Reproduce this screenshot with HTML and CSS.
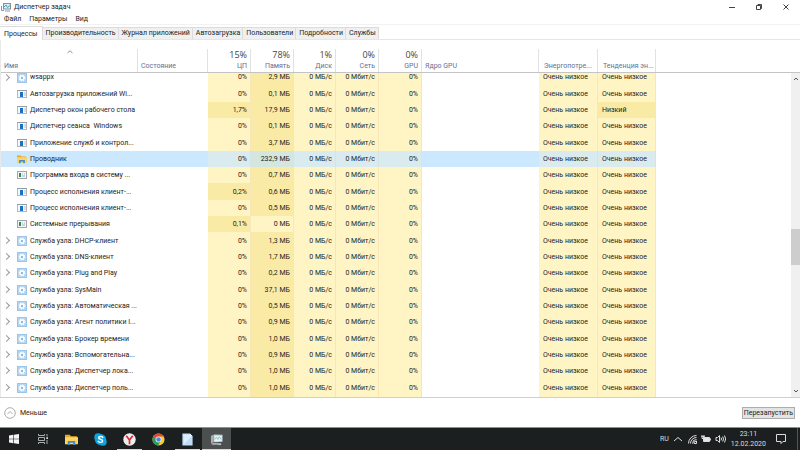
FILE: index.html
```html
<!DOCTYPE html>
<html lang="ru">
<head>
   <meta charset="utf-8">
   <title>Диспетчер задач</title>
   <link rel="stylesheet" href="styles.css">
</head>

<body>
   <!-- shared process icons -->
   <svg class="sprite" aria-hidden="true">
      <symbol id="gear" viewBox="0 0 10 10">
         <rect x="0.5" y="0.5" width="9" height="9" fill="#b4d5f1" stroke="#9cc4e6" />
         <circle cx="5" cy="5" r="2.700" fill="none" stroke="#fff" stroke-width="1.400" stroke-dasharray="1.200 0.920" />
         <circle cx="5" cy="5" r="1.800" fill="#8abbe6" stroke="#fff" stroke-width="1.200" />
      </symbol>
      <symbol id="app" viewBox="0 0 10 10">
         <rect x="0.5" y="1.5" width="9" height="7" fill="#f7f8f9" stroke="#b3b8bc" />
         <path d="M0 1.5H10" stroke="#979da2" />
         <rect x="3" y="3" width="3" height="5" fill="#1673c8" />
         <path d="M7 4H9M7 6H9" stroke="#b9c4cd" />
      </symbol>
      <symbol id="sys" viewBox="0 0 10 10">
         <rect x="0.5" y="1.5" width="9" height="7" fill="#f4f7f6" stroke="#a0a6ab" />
         <rect x="2" y="3" width="2" height="4" fill="#2d8a63" />
         <path d="M5 4H6M7 4H8M5 6H8" stroke="#9fb9ba" />
      </symbol>
      <symbol id="folder" viewBox="0 0 14 12">
         <path d="M0 1H5L6.500 2.500H13V11H0Z" fill="#e9a825" />
         <path d="M0 3.500H14V11H0Z" fill="#fcd462" />
         <path d="M3 12V7.500H11V12H8.800V9.500H5.200V12Z" fill="#3d8bd0" />
      </symbol>
   </svg>

   <main class="window">
      <header class="titlebar">
         <svg class="logo" viewBox="0 0 10 9">
            <rect x="2.500" y="0.5" width="7" height="5.500" fill="#d5edf3" stroke="#7f9298" />
            <path d="M3 4L5 2L6.500 4.500L9 2.500" fill="none" stroke="#46a5bd" />
            <path d="M0.5 3V7.500H3M4 8H9" fill="none" stroke="#89999e" />
         </svg>
         <h1>Диспетчер задач</h1>
         <div class="controls">
            <button aria-label="Свернуть"><svg viewBox="0 0 8 8"><path d="M1 4.500H7" /></svg></button>
            <button aria-label="Восстановить"><svg viewBox="0 0 8 8"><path d="M1.500 2.500H5.500V6.500H1.500ZM3 2.500V1.500H6.500V5.500H5.500" /></svg></button>
            <button aria-label="Закрыть"><svg viewBox="0 0 8 8"><path d="M1.500 1.500L6.500 6.500M6.500 1.500L1.500 6.500" /></svg></button>
         </div>
      </header>

      <nav class="menu">
         <button>Файл</button>
         <button>Параметры</button>
         <button>Вид</button>
      </nav>

      <div class="tabs" role="tablist">
         <button role="tab" class="current" aria-selected="true">Процессы</button>
         <button role="tab">Производительность</button>
         <button role="tab">Журнал приложений</button>
         <button role="tab">Автозагрузка</button>
         <button role="tab">Пользователи</button>
         <button role="tab">Подробности</button>
         <button role="tab">Службы</button>
      </div>

      <div class="list">
         <table>
            <colgroup>
               <col class="c-name"><col class="c-state"><col class="c-num"><col class="c-num"><col class="c-disk">
               <col class="c-num"><col class="c-num"><col class="c-core"><col class="c-power"><col class="c-trend"><col>
            </colgroup>
            <thead>
               <tr>
                  <th class="sorted"><svg class="sort" viewBox="0 0 6 4"><path d="M0.500 3L3 0.800L5.500 3" /></svg>Имя</th>
                  <th>Состояние</th>
                  <th class="num"><b>15%</b>ЦП</th>
                  <th class="num"><b>78%</b>Память</th>
                  <th class="num"><b>1%</b>Диск</th>
                  <th class="num"><b>0%</b>Сеть</th>
                  <th class="num"><b>0%</b>GPU</th>
                  <th>Ядро GPU</th>
                  <th class="power">Энергопотре...</th>
                  <th class="power">Тенденция эн...</th>
                  <th></th>
               </tr>
            </thead>
            <tbody>
               <tr class="cut group"><td><svg><use href="#gear" /></svg>wsappx</td><td></td><td>0%</td><td>2,9 МБ</td><td>0 МБ/с</td><td>0 Мбит/с</td><td>0%</td><td></td><td>Очень низкое</td><td>Очень низкое</td><td></td></tr>
               <tr><td><svg><use href="#app" /></svg>Автозагрузка приложений Wi...</td><td></td><td>0%</td><td>0,1 МБ</td><td>0 МБ/с</td><td>0 Мбит/с</td><td>0%</td><td></td><td>Очень низкое</td><td>Очень низкое</td><td></td></tr>
               <tr><td><svg><use href="#app" /></svg>Диспетчер окон рабочего стола</td><td></td><td class="warm">1,7%</td><td>17,9 МБ</td><td>0 МБ/с</td><td>0 Мбит/с</td><td>0%</td><td></td><td>Очень низкое</td><td class="warm">Низкий</td><td></td></tr>
               <tr><td><svg><use href="#app" /></svg>Диспетчер сеанса&nbsp; Windows</td><td></td><td>0%</td><td>0,1 МБ</td><td>0 МБ/с</td><td>0 Мбит/с</td><td>0%</td><td></td><td>Очень низкое</td><td>Очень низкое</td><td></td></tr>
               <tr><td><svg><use href="#app" /></svg>Приложение служб и контрол...</td><td></td><td>0%</td><td>3,7 МБ</td><td>0 МБ/с</td><td>0 Мбит/с</td><td>0%</td><td></td><td>Очень низкое</td><td>Очень низкое</td><td></td></tr>
               <tr class="selected"><td><svg><use href="#folder" /></svg>Проводник</td><td></td><td>0%</td><td>232,9 МБ</td><td>0 МБ/с</td><td>0 Мбит/с</td><td>0%</td><td></td><td>Очень низкое</td><td>Очень низкое</td><td></td></tr>
               <tr><td><svg><use href="#sys" /></svg>Программа входа в систему ...</td><td></td><td>0%</td><td>0,7 МБ</td><td>0 МБ/с</td><td>0 Мбит/с</td><td>0%</td><td></td><td>Очень низкое</td><td>Очень низкое</td><td></td></tr>
               <tr><td><svg><use href="#app" /></svg>Процесс исполнения клиент-...</td><td></td><td class="warm">0,2%</td><td>0,6 МБ</td><td>0 МБ/с</td><td>0 Мбит/с</td><td>0%</td><td></td><td>Очень низкое</td><td>Очень низкое</td><td></td></tr>
               <tr><td><svg><use href="#app" /></svg>Процесс исполнения клиент-...</td><td></td><td>0%</td><td>0,5 МБ</td><td>0 МБ/с</td><td>0 Мбит/с</td><td>0%</td><td></td><td>Очень низкое</td><td>Очень низкое</td><td></td></tr>
               <tr><td><svg><use href="#sys" /></svg>Системные прерывания</td><td></td><td class="warm">0,1%</td><td class="cool">0 МБ</td><td>0 МБ/с</td><td>0 Мбит/с</td><td>0%</td><td></td><td>Очень низкое</td><td>Очень низкое</td><td></td></tr>
               <tr class="group"><td><svg><use href="#gear" /></svg>Служба узла: DHCP-клиент</td><td></td><td>0%</td><td>1,3 МБ</td><td>0 МБ/с</td><td>0 Мбит/с</td><td>0%</td><td></td><td>Очень низкое</td><td>Очень низкое</td><td></td></tr>
               <tr class="group"><td><svg><use href="#gear" /></svg>Служба узла: DNS-клиент</td><td></td><td>0%</td><td>1,7 МБ</td><td>0 МБ/с</td><td>0 Мбит/с</td><td>0%</td><td></td><td>Очень низкое</td><td>Очень низкое</td><td></td></tr>
               <tr class="group"><td><svg><use href="#gear" /></svg>Служба узла: Plug and Play</td><td></td><td>0%</td><td>0,2 МБ</td><td>0 МБ/с</td><td>0 Мбит/с</td><td>0%</td><td></td><td>Очень низкое</td><td>Очень низкое</td><td></td></tr>
               <tr class="group"><td><svg><use href="#gear" /></svg>Служба узла: SysMain</td><td></td><td>0%</td><td>37,1 МБ</td><td>0 МБ/с</td><td>0 Мбит/с</td><td>0%</td><td></td><td>Очень низкое</td><td>Очень низкое</td><td></td></tr>
               <tr class="group"><td><svg><use href="#gear" /></svg>Служба узла: Автоматическая ...</td><td></td><td>0%</td><td>0,5 МБ</td><td>0 МБ/с</td><td>0 Мбит/с</td><td>0%</td><td></td><td>Очень низкое</td><td>Очень низкое</td><td></td></tr>
               <tr class="group"><td><svg><use href="#gear" /></svg>Служба узла: Агент политики I...</td><td></td><td>0%</td><td>0,9 МБ</td><td>0 МБ/с</td><td>0 Мбит/с</td><td>0%</td><td></td><td>Очень низкое</td><td>Очень низкое</td><td></td></tr>
               <tr class="group"><td><svg><use href="#gear" /></svg>Служба узла: Брокер времени</td><td></td><td>0%</td><td>1,0 МБ</td><td>0 МБ/с</td><td>0 Мбит/с</td><td>0%</td><td></td><td>Очень низкое</td><td>Очень низкое</td><td></td></tr>
               <tr class="group"><td><svg><use href="#gear" /></svg>Служба узла: Вспомогательна...</td><td></td><td>0%</td><td>0,9 МБ</td><td>0 МБ/с</td><td>0 Мбит/с</td><td>0%</td><td></td><td>Очень низкое</td><td>Очень низкое</td><td></td></tr>
               <tr class="group"><td><svg><use href="#gear" /></svg>Служба узла: Диспетчер лока...</td><td></td><td>0%</td><td>1,0 МБ</td><td>0 МБ/с</td><td>0 Мбит/с</td><td>0%</td><td></td><td>Очень низкое</td><td>Очень низкое</td><td></td></tr>
               <tr class="group"><td><svg><use href="#gear" /></svg>Служба узла: Диспетчер поль...</td><td></td><td>0%</td><td>1,0 МБ</td><td>0 МБ/с</td><td>0 Мбит/с</td><td>0%</td><td></td><td>Очень низкое</td><td>Очень низкое</td><td></td></tr>
            </tbody>
         </table>
         <div class="side">
            <div class="corner"></div>
            <div class="scrollbar">
               <button aria-label="Вверх"><svg viewBox="0 0 6 4"><path d="M1 3L3 1L5 3" /></svg></button>
               <div class="before"></div>
               <div class="thumb"></div>
               <div class="after"></div>
               <button aria-label="Вниз"><svg viewBox="0 0 6 4"><path d="M1 1L3 3L5 1" /></svg></button>
            </div>
         </div>
      </div>

      <footer class="actions">
         <button class="less">
            <svg viewBox="0 0 12 12"><circle cx="6" cy="6" r="5.300" /><path d="M3.500 7L6 4.500L8.500 7" /></svg>
            Меньше
         </button>
         <button class="restart">Перезапустить</button>
      </footer>
   </main>

   <div class="taskbar">
      <button class="start" aria-label="Пуск">
         <svg viewBox="0 0 10 10"><path d="M0 1.400L4.300 0.800V4.700H0ZM4.900 0.700L10 0V4.700H4.900ZM0 5.300H4.300V9.200L0 8.600ZM4.900 5.300H10V10L4.900 9.300Z" fill="#f4f4f4" /></svg>
      </button>
      <button aria-label="Представление задач">
         <svg viewBox="0 0 10 10"><path d="M0.500 0V1.500H6.500V0M0.500 10V8.500H6.500V10M0.500 3.500H6.500V6.500H0.500ZM9 0V2.500M9 6V10" fill="none" stroke="#b9bcbd" stroke-width="0.900" /><rect x="8.300" y="3.300" width="1.700" height="1.700" fill="#e0e0e0" /></svg>
      </button>
      <button aria-label="Проводник"><svg class="big" viewBox="0 0 14 12"><use href="#folder" width="14" height="12" /></svg></button>
      <button aria-label="Skype">
         <svg class="big" viewBox="0 0 14 14"><circle cx="4.500" cy="4.500" r="4.200" fill="#0aa5e3" /><circle cx="9.500" cy="9.500" r="4.200" fill="#0aa5e3" /><circle cx="7" cy="7" r="6" fill="#0aa5e3" /><path d="M9.500 4.800C8.600 3.400 4.900 3.400 5 5.300C5.100 7.200 9.300 6.300 9.300 8.500C9.300 10.500 5.500 10.500 4.500 8.900" fill="none" stroke="#fff" stroke-width="1.500" stroke-linecap="round" /></svg>
      </button>
      <button class="running" aria-label="Яндекс">
         <svg class="big" viewBox="0 0 14 14"><circle cx="7" cy="7" r="6.700" fill="#eee" /><path d="M3.500 3L7 7.500V12M10.500 3L7 7.500" fill="none" stroke="#dc2630" stroke-width="1.800" /></svg>
      </button>
      <button aria-label="Chrome">
         <svg class="big" viewBox="0 0 14 14"><circle cx="7" cy="7" r="6.500" fill="#fbcb35" /><path d="M7 7L1.370 3.750A6.500 6.500 0 0 1 12.630 3.750H7Z" fill="#df4637" /><path d="M7 7L1.370 3.750A6.500 6.500 0 0 0 6.500 13.480L9.600 8.500Z" fill="#269e57" /><circle cx="7" cy="7" r="3.200" fill="#f5f5f5" /><circle cx="7" cy="7" r="2.400" fill="#4a87e5" /></svg>
      </button>
      <button class="running" aria-label="Документ">
         <svg class="big" viewBox="0 0 14 14"><path d="M1.500 0.500H9.500L12.500 3.500V13.500H1.500Z" fill="#bcdcf8" /><path d="M2.500 1.500H8.500L11 4L3 12.500Z" fill="#dceefd" /><path d="M9.500 0.500V3.500H12.500Z" fill="#f8fcff" /></svg>
      </button>
      <button class="running active" aria-label="Диспетчер задач">
         <svg class="big" viewBox="0 0 14 14"><path d="M1 3L4 2V10L1 11ZM1 11L8 10.500L9 12.500L3 13Z" fill="#a8adaf" /><path d="M4 1.500L13.500 2V9.500L4 10Z" fill="#c9d0d2" /><path d="M5 3L12.500 3.300V8.500L5 8.800Z" fill="#e7f5f8" /><path d="M5 7L7 4.500L8.500 7L10 4L12 7" fill="none" stroke="#67b5cc" stroke-width="0.800" /><path d="M8 11H12V13H8Z" fill="#b6bbbd" /></svg>
      </button>

      <div class="tray">
         <span class="lang">RU</span>
         <svg viewBox="0 0 10 10"><path d="M1 7L5 3.500L9 7" /></svg>
         <svg viewBox="0 0 10 10"><path d="M1.500 9.500A8 8 0 0 1 9.500 1.500M3.500 9.500A6 6 0 0 1 9.500 3.500M5.500 9.500A4 4 0 0 1 9.500 5.500" stroke="#aaa" /><path d="M7 9.500V8L9.500 7V9.500Z" fill="#ddd" stroke="none" /></svg>
         <svg viewBox="0 0 10 10"><path class="charge" d="M2.500 3.500H8.500V7.500H2.500Z" /><path d="M9.500 4.500V6.500M0.500 2.500H3.500M1 1V4.500H3V1" /></svg>
         <svg class="volume" viewBox="0 0 12 10"><path d="M1 3.500H2.500L4.500 1.500V8.500L2.500 6.500H1ZM6 3.500Q7 5 6 6.500M7.700 2.500Q9.300 5 7.700 7.500M9.500 1.500Q11.800 5 9.500 8.500" /></svg>
         <div class="clock"><time>23:11</time><span>12.02.2020</span></div>
         <svg class="notes" viewBox="0 0 12 12"><path d="M1.500 1.500H10.500V8.500H8L6 10.500V8.500H1.500Z" /></svg>
      </div>
   </div>
</body>
</html>
```
FILE: styles.css
```css
/* Basic styles */

* {
   box-sizing: border-box;
}
body {
   margin: 0;
   background: white;
   color: #1c1c1c;
   font: 7px/10px Roboto, "Open Sans", sans-serif;
}
button {
   margin: 0;
   padding: 0;
   border: 0;
   background: none;
   color: inherit;
   font: inherit;
}
svg {
   display: block;
   flex: none;
}
.sprite {
   position: absolute;
   width: 0;
   height: 0;
}

/* Title bar and menu */

.titlebar {
   display: flex;
   align-items: center;
   height: 14px;
   padding-left: 1px;
}
.titlebar h1 {
   margin: 0 0 0 3px;
   font-size: 7px;
   font-weight: normal;
}
.logo {
   width: 10px;
   height: 9px;
}
.controls {
   display: flex;
   gap: 19px;
   margin-left: auto;
   padding-right: 10px;
}
.controls svg {
   width: 8px;
   height: 8px;
}
.controls path {
   fill: none;
   stroke: #444;
}
.menu {
   display: flex;
   gap: 8px;
   height: 11px;
   padding-left: 4px;
   border-bottom: 1px solid #f2f2f2;
}

/* Tabs */

.tabs {
   display: flex;
   align-items: flex-end;
   height: 15px;
   border-bottom: 1px solid #e6e6e6;
}
.tabs button {
   height: 12px;
   padding: 0 2px 0 3px;
   border: 1px solid #dcdcdc;
   border-left: 0;
   border-bottom: 0;
   background: #f0f0f0;
   line-height: 11px;
}
.tabs .current {
   height: 14px;
   margin-bottom: -1px;
   padding: 0 4px;
   background: white;
   line-height: 12px;
}

/* Process list */

.list {
   display: flex;
   border-bottom: 1px solid #cfcfcf;
}
table {
   flex: 1;
   width: 0;
   table-layout: fixed;
   border-collapse: separate;
   border-spacing: 0;
   border-left: 1px solid #e9e9e9;
   white-space: nowrap;
}
.c-name { width: 137px; }
.c-state { width: 70px; }
.c-num { width: 43px; }
.c-disk { width: 42px; }
.c-core { width: 117px; }
.c-power { width: 59px; }
.c-trend { width: 58px; }

th {
   height: 33px;
   padding: 0 3px 1px;
   border-bottom: 1px solid #c4c4c4;
   background: linear-gradient(#e2e2e2, #e2e2e2) right 9px / 1px 100% no-repeat;
   color: #5f7192;
   font-weight: normal;
   text-align: left;
   vertical-align: bottom;
}
th:last-child {
   background: none;
}
th.num {
   padding-right: 4px;
   text-align: right;
}
th.power {
   padding-left: 5px;
}
th b {
   display: block;
   color: #444;
   font-family: "Open Sans", sans-serif;
   font-size: 9px;
   font-weight: normal;
   line-height: 12px;
}
.sort {
   width: 6px;
   height: 4px;
   margin: 0 auto 7px;
}
.sort path {
   fill: none;
   stroke: #8a95a5;
}
td {
   height: 16px;
   padding: 0 3px 0 4px;
}
tbody tr:nth-child(3n+2) td {
   height: 17px;
}
tbody tr:last-child td {
   height: 18px;
}
td:nth-child(n+3) {
   border-right: 1px solid #f8e5b8;
   background: #fff4c4;
   text-align: right;
}
td:nth-child(4), td.warm {
   background: #f9eba6;
}
td.cool {
   background: #fff4c4;
}
td:nth-child(8), td:nth-child(11) {
   border: 0;
   background: none;
}
td:nth-child(9), td:nth-child(10) {
   text-align: left;
}
td:first-child {
   padding: 0 0 0 29px;
}
td svg {
   float: left;
   width: 10px;
   height: 10px;
   margin-left: -13px;
}
/* arrow in front of a row that can be expanded */
.group td:first-child::before {
   content: "";
   float: left;
   width: 4px;
   height: 4px;
   margin: 2px 0 0 -26px;
   border: solid #999;
   border-width: 1px 1px 0 0;
   transform: rotate(45deg);
}
tbody .cut td {
   height: 12px;
   line-height: 8px;
   vertical-align: top;
}
.selected td {
   background: #cce8ff;
}
.selected td:nth-child(n+3) {
   border-color: #d3e3e8;
   background: #daebf0;
}
.selected td:nth-child(4) {
   background: #d5e6df;
}
.selected td:nth-child(8) {
   background: #cce8ff;
}
.selected td:nth-child(11) {
   background: none;
}

/* Scroll bar */

.side {
   display: flex;
   flex-direction: column;
   width: 9px;
}
.corner {
   height: 33px;
   border-bottom: 1px solid #c4c4c4;
}
.scrollbar {
   display: flex;
   flex: 1;
   flex-direction: column;
   background: #f0f0f0;
}
.scrollbar button {
   display: flex;
   justify-content: center;
   align-items: center;
   height: 11px;
}
.scrollbar svg {
   width: 6px;
   height: 4px;
}
.scrollbar path {
   fill: none;
   stroke: #555;
}
.before {
   flex: 145;
}
.thumb {
   flex: 37;
   background: #cdcdcd;
}
.after {
   flex: 121;
}

/* Bottom row of the window */

.actions {
   display: flex;
   justify-content: space-between;
   align-items: center;
   height: 29px;
   padding: 0 5px 0 4px;
}
.less {
   display: flex;
   align-items: center;
   gap: 4px;
}
.less svg {
   width: 12px;
   height: 12px;
}
.less svg * {
   fill: none;
   stroke: #888;
   stroke-width: 0.7;
}
.restart {
   height: 12px;
   padding: 0 1px;
   border: 1px solid #adadad;
   background: #e3e3e3;
}

/* Taskbar */

.taskbar {
   display: flex;
   height: 23px;
   border-top: 1px solid #8b9294;
   background: #1b1f20;
   color: #ddd;
}
.taskbar button {
   display: flex;
   justify-content: center;
   align-items: center;
   width: 29px;
   border: solid transparent;
   border-width: 1px 0;
}
.taskbar .start {
   width: 28px;
}
.taskbar button svg {
   width: 10px;
   height: 10px;
}
.taskbar button .big {
   width: 13px;
   height: 13px;
}
.taskbar .running {
   border-bottom-color: #f3d680;
   margin: 0 2px;
   width: 25px;
}
.taskbar .active {
   width: 29px;
   margin: 0;
   background: #4c4f50;
}
.tray {
   display: flex;
   align-items: center;
   gap: 4px;
   margin-left: auto;
   margin-right: 2px;
   padding-right: 10px;
   border-right: 1px solid #555;
}
.tray svg {
   width: 10px;
   height: 10px;
}
.tray path {
   fill: none;
   stroke: #ddd;
}
.tray .charge {
   fill: #e6e6e6;
}
.tray .volume {
   width: 12px;
}
.tray .notes {
   width: 12px;
   height: 12px;
   margin-left: 5px;
}
.clock {
   display: flex;
   flex-direction: column;
   align-items: center;
}
```
